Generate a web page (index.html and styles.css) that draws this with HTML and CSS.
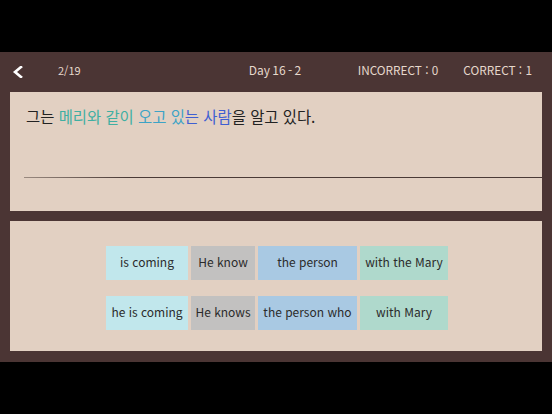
FILE: index.html
```html
<!DOCTYPE html>
<html lang="ko">
<head>
<meta charset="utf-8">
<link rel="stylesheet" href="styles.css">
</head>
<body>
<div class="screen">
  <div class="black-bar"></div>
  <div class="app">
    <header class="header">
      <div class="left">
        <svg class="back" width="12" height="12" viewBox="0 0 12 12"><path d="M9 1 L3 6 L9 11" fill="none" stroke="#ffffff" stroke-width="2.6" stroke-linecap="square" stroke-linejoin="miter"/></svg>
        <span class="count">2/19</span>
      </div>
      <div class="title">Day 16 - 2</div>
      <div class="right">
        <span class="score">INCORRECT : 0</span>
        <span class="score">CORRECT : 1</span>
      </div>
    </header>
    <section class="card question">
      <p class="sentence">그는 <span class="c-teal">메리와 같이</span> <span class="c-sky">오고 있</span><span class="c-blue">는 사람</span>을 알고 있다.</p>
      <div class="answer-line"></div>
    </section>
    <section class="card choices">
      <div class="grid">
        <div class="chip col1">is coming</div>
        <div class="chip col2">He know</div>
        <div class="chip col3">the person</div>
        <div class="chip col4">with the Mary</div>
        <div class="chip col1">he is coming</div>
        <div class="chip col2">He knows</div>
        <div class="chip col3">the person who</div>
        <div class="chip col4">with Mary</div>
      </div>
    </section>
  </div>
  <div class="black-bar"></div>
</div>
</body>
</html>
```
FILE: styles.css
```css
html, body {
  margin: 0;
  padding: 0;
  background: #000;
}
body {
  font-family: "Noto Sans CJK KR", "Noto Sans", sans-serif;
  width: 552px;
  height: 414px;
  overflow: hidden;
}
.screen {
  display: flex;
  flex-direction: column;
  height: 414px;
}
.black-bar {
  height: 52px;
  background: #000;
  flex: none;
}
.app {
  flex: 1;
  background: #4b3534;
  display: flex;
  flex-direction: column;
  padding: 0 10px 11px 10px;
}
.header {
  height: 40px;
  box-sizing: border-box;
  display: grid;
  grid-template-columns: minmax(0, 1fr) auto minmax(0, 1fr);
  align-items: center;
  color: #e6d8cc;
  margin: 0 -10px;
  padding: 0 20px 5px 12px;
}
.left {
  display: flex;
  align-items: center;
}
.back {
  display: block;
  margin-right: 34px;
  position: relative;
  top: 2px;
}
.count {
  font-size: 11px;
}
.title {
  font-size: 12px;
  word-spacing: -1px;
  padding-left: 6px;
}
.right {
  display: flex;
  justify-content: flex-end;
  gap: 25px;
  font-size: 11.8px;
  white-space: nowrap;
}
.card {
  background: #e2d0c2;
}
.question {
  height: 119px;
  display: flex;
  flex-direction: column;
  margin-bottom: 10px;
}
.sentence {
  margin: 12px 0 0 16px;
  font-size: 15.4px;
  line-height: 24px;
  color: #222;
}
.c-teal { color: #3fafa2; }
.c-sky { color: #3ca3c6; }
.c-blue { color: #3f5fd2; }
.answer-line {
  margin: 49px 0 0 14px;
  height: 1px;
  background: linear-gradient(to right, #9a8a80, #4a3a36 20%, #4a3a36);
}
.choices {
  flex: 1;
  padding-top: 25px;
}
.grid {
  display: grid;
  grid-template-columns: 82px 64px 99px 88px;
  column-gap: 3px;
  row-gap: 16px;
  justify-content: center;
  padding-left: 2px;
}
.chip {
  height: 34px;
  box-sizing: border-box;
  padding-bottom: 3px;
  display: flex;
  align-items: center;
  justify-content: center;
  font-size: 12px;
  color: #2b2b2b;
  white-space: nowrap;
}
.col1 { background: #c1e7ec; }
.col2 { background: #c2c1c0; }
.col3 { background: #a9c9e3; }
.col4 { background: #afd9cc; }
```
